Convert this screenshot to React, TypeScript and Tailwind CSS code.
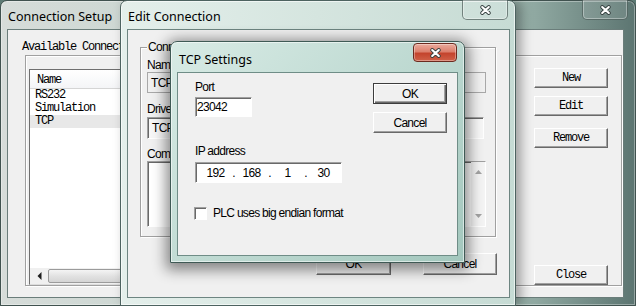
import React from 'react';

const mono = "font-['Liberation_Mono',monospace] text-[12px] leading-[13px] tracking-[-1.2px] text-black";
const dlg = "font-['Liberation_Sans',Arial,sans-serif] text-[12px] leading-[14px] tracking-[-0.7px] text-black";
const caption = "font-['Noto_Sans',sans-serif] text-[12.5px] leading-[16px] text-black whitespace-nowrap";

const raised =
  'border border-t-white border-l-white border-b-[#696969] border-r-[#696969] shadow-[inset_-1px_-1px_0_#a0a0a0] bg-[#f0f0f0]';
const sunken =
  'border border-t-[#a0a0a0] border-l-[#a0a0a0] border-b-white border-r-white shadow-[inset_1px_1px_0_#696969]';
const etched = 'border border-[#a0a0a0] shadow-[1px_1px_0_#fff,inset_1px_1px_0_#fff]';

function XGlyph() {
  return (
    <svg width="11" height="10" viewBox="0 0 11 10">
      <path d="M2.2 2 L8.8 8 M8.8 2 L2.2 8" stroke="#35403f" strokeWidth="3.8" strokeLinecap="round" />
      <path d="M2.2 2 L8.8 8 M8.8 2 L2.2 8" stroke="#ffffff" strokeWidth="2.1" strokeLinecap="round" />
    </svg>
  );
}

function InactiveClose() {
  return (
    <div className="absolute right-[7px] top-[-1px] w-[46px] h-[20px] rounded-b-[5px] border border-t-0 border-[#4a5b58]/70 bg-white/10 shadow-[inset_0_0_0_1px_rgba(255,255,255,0.35)] flex items-center justify-center">
      <XGlyph />
    </div>
  );
}

function ListRow({ label, selected }: { label: string; selected?: boolean }) {
  return (
    <div className={selected ? `h-[13px] pl-[5px] bg-[#e8e8e8] ${mono}` : `h-[13px] pl-[5px] ${mono}`}>{label}</div>
  );
}

function MonoButton({ label, className }: { label: string; className?: string }) {
  return (
    <div className={`w-[74px] h-[20px] flex items-center justify-center ${raised} ${mono} ${className ?? ''}`}>
      {label}
    </div>
  );
}

function ConnectionSetup() {
  return (
    <div className="absolute left-0 top-0 w-[636px] h-[306px] rounded-t-[7px] border border-[#40524f] bg-[linear-gradient(90deg,#d6dcd9_0%,#c5d3cd_40%,#9db6ae_80%,#5c7571_100%)] shadow-[inset_0_0_0_1px_rgba(255,255,255,0.35)] flex flex-col">
      <div className="h-[28px] relative pl-[7px] pt-[2px]">
        <span className={caption}>Connection Setup</span>
        <InactiveClose />
      </div>
      <div className="ml-[6px] mr-[11px] mb-[7px] flex-1 border border-[#6a7d7a] bg-[#f0f0f0] flex flex-col">
        <div className={`ml-[14px] mt-[10px] h-[14px] leading-[14px] ${mono}`}>Available Connections</div>
        <div className={`ml-[17px] mr-[1px] mt-[1px] h-[231px] flex ${etched}`}>
          <div className="ml-[3px] mt-[13px] w-[480px] flex flex-col bg-white border border-t-[#6f6f6f] border-l-[#6f6f6f] border-b-[#dcdcdc] border-r-[#dcdcdc]">
            <div className="h-[19px] flex items-center pl-[7px] pt-[2px] bg-[linear-gradient(180deg,#ffffff,#f4f5f7)] border-b border-[#d5d5d5]">
              <span className={mono}>Name</span>
            </div>
            <ListRow label="RS232" />
            <ListRow label="Simulation" />
            <ListRow label="TCP" selected />
            <div className="mt-auto h-[16px] flex bg-[#f0f0f0]">
              <div className="w-[18px] flex items-center justify-center">
                <svg width="5" height="8" viewBox="0 0 5 8">
                  <path d="M4.5 0 L0.5 4 L4.5 8 Z" fill="#1e1e1e" />
                </svg>
              </div>
              <div className="flex-1 my-[1px] rounded-[2px] border border-[#9b9b9b] bg-[linear-gradient(180deg,#f4f4f4,#e2e2e2_50%,#d4d4d4)]" />
            </div>
          </div>
          <div className="ml-auto mr-[13px] pt-[12px] flex flex-col">
            <MonoButton label="New" />
            <MonoButton label="Edit" className="mt-[8px]" />
            <MonoButton label="Remove" className="mt-[12px]" />
            <MonoButton label="Close" className="mt-auto" />
          </div>
        </div>
      </div>
    </div>
  );
}

function EditConnection() {
  return (
    <div className="absolute left-[120px] top-0 w-[396px] h-[306px] rounded-t-[7px] border border-[#4d6360] bg-[linear-gradient(90deg,#e4efeb_0%,#d5e5df_50%,#c6dbd4_100%)] shadow-[5px_0_12px_rgba(0,0,0,0.35),inset_0_0_0_1px_rgba(255,255,255,0.6)] flex flex-col">
      <div className="h-[28px] relative pl-[7px] pt-[2px]">
        <span className={caption}>Edit Connection</span>
        <InactiveClose />
      </div>
      <div className="ml-[6px] mr-[5px] mb-[7px] flex-1 border border-[#6d8581] bg-[#f0f0f0] flex flex-col">
        <div className={`ml-[12px] mt-[17px] w-[356px] h-[190px] relative ${etched}`}>
          <span className={`absolute left-[6px] top-[-8px] px-[1px] bg-[#f0f0f0] ${dlg}`}>Connection</span>
          <div className="pl-[6px] pt-[10px] flex flex-col">
            <span className={dlg}>Name</span>
            <div className={`w-[339px] h-[21px] flex items-center pl-[3px] bg-[#f0f0f0] border border-[#a8a8a8] ${dlg} text-[#8a8a8a]`}>
              TCP
            </div>
            <span className={`mt-[9px] ${dlg}`}>Driver</span>
            <div className={`mt-[1px] w-[337px] h-[22px] flex items-center pl-[4px] bg-[#f7f7f7] ${sunken} ${dlg}`}>TCP</div>
            <span className={`mt-[8px] ${dlg}`}>Comment</span>
            <div className={`w-[339px] h-[66px] flex justify-end bg-white ${sunken}`}>
              <div className="w-[14px] flex flex-col items-center justify-between py-[8px] bg-[#f4f4f4]">
                <svg width="7" height="4" viewBox="0 0 7 4">
                  <path d="M0 4 L3.5 0 L7 4 Z" fill="#a3a3a3" />
                </svg>
                <svg width="7" height="4" viewBox="0 0 7 4">
                  <path d="M0 0 L3.5 4 L7 0 Z" fill="#a3a3a3" />
                </svg>
              </div>
            </div>
          </div>
        </div>
        <div className="mt-[16px] mr-[12px] flex justify-end gap-[32px]">
          <div className={`w-[75px] h-[22px] flex items-center justify-center ${raised} ${dlg}`}>OK</div>
          <div className={`w-[74px] h-[22px] flex items-center justify-center ${raised} ${dlg}`}>Cancel</div>
        </div>
      </div>
    </div>
  );
}

function TcpSettings() {
  return (
    <div className="absolute left-[170px] top-[41px] w-[295px] h-[222px] rounded-t-[7px] border border-[#3f5a55] bg-[linear-gradient(135deg,#d8ebe5_0%,#bcd8d0_55%,#a3c7bd_100%)] shadow-[0_3px_14px_4px_rgba(0,0,0,0.45),inset_0_0_0_1px_rgba(255,255,255,0.55)] flex flex-col">
      <div className="h-[30px] relative pl-[8px] pt-[4px]">
        <span className={caption}>TCP Settings</span>
        <div className="absolute right-[7px] top-[1px] w-[44px] h-[19px] rounded-[4px] border border-[#6b2a1f] bg-[linear-gradient(180deg,#eaab9c_0%,#dc806d_45%,#c4442d_55%,#cf6148_100%)] shadow-[inset_0_0_0_1px_rgba(255,255,255,0.35)] flex items-center justify-center">
          <XGlyph />
        </div>
      </div>
      <div className="ml-[6px] mr-[6px] mb-[6px] flex-1 border border-[#6f8d87] bg-[#f0f0f0] flex">
        <div className="pl-[17px] pt-[7px] flex flex-col flex-1">
          <span className={dlg}>Port</span>
          <div className={`mt-[3px] w-[57px] h-[20px] flex items-center pl-[1px] bg-white ${sunken} ${dlg}`}>23042</div>
          <span className={`mt-[27px] ${dlg}`}>IP address</span>
          <div className={`mt-[4px] w-[147px] h-[21px] flex items-center pl-[5px] bg-white ${sunken} ${dlg}`}>
            <span className="w-[29px] text-center">192</span>
            <span className="w-[7px] text-center">.</span>
            <span className="w-[29px] text-center">168</span>
            <span className="w-[7px] text-center">.</span>
            <span className="w-[29px] text-center">1</span>
            <span className="w-[7px] text-center">.</span>
            <span className="w-[29px] text-center">30</span>
          </div>
          <div className="mt-[23px] -ml-[1px] flex items-center gap-[6px]">
            <div className={`w-[13px] h-[13px] bg-white ${sunken}`} />
            <span className={dlg}>PLC uses big endian format</span>
          </div>
        </div>
        <div className="w-[74px] mr-[10px] pt-[10px] flex flex-col">
          <div className={`h-[21px] flex items-center justify-center bg-[#f0f0f0] border border-[#3c3c3c] shadow-[inset_1px_1px_0_#fff,inset_-1px_-1px_0_#696969,inset_-2px_-2px_0_#a0a0a0] ${dlg}`}>
            OK
          </div>
          <div className={`mt-[8px] h-[21px] flex items-center justify-center ${raised} ${dlg}`}>Cancel</div>
        </div>
      </div>
    </div>
  );
}

export default function App() {
  return (
    <div className="relative w-[636px] h-[306px] overflow-hidden bg-[#5d7a74]">
      <ConnectionSetup />
      <EditConnection />
      <TcpSettings />
    </div>
  );
}
